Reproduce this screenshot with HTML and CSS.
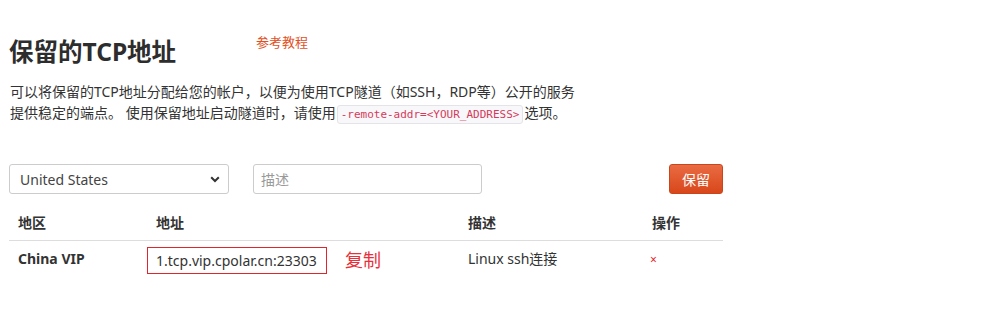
FILE: index.html
```html
<!DOCTYPE html>
<html>
<head>
<meta charset="utf-8">
<link rel="stylesheet" href="styles.css">
</head>
<body>
<div class="page">
  <div class="title-row">
    <h1 class="title">保留的TCP地址</h1>
    <a class="tutorial">参考教程</a>
  </div>
  <p class="desc">可以将保留的TCP地址分配给您的帐户，以便为使用TCP隧道（如SSH，RDP等）公开的服务<br>提供稳定的端点。 使用保留地址启动隧道时，请使用<code class="code">-remote-addr=&lt;YOUR_ADDRESS&gt;</code>选项。</p>
  <div class="form-row">
    <div class="select">
      <span>United States</span>
      <svg class="chev" width="10" height="7" viewBox="0 0 10 7"><path d="M1.2 1.2 L5 5 L8.8 1.2" fill="none" stroke="#333" stroke-width="2"/></svg>
    </div>
    <div class="input"><span class="ph">描述</span></div>
    <div class="spacer"></div>
    <button class="btn">保留</button>
  </div>
  <div class="table">
    <div class="thead">
      <div class="c1">地区</div>
      <div class="c2">地址</div>
      <div class="c3">描述</div>
      <div class="c4">操作</div>
    </div>
    <div class="trow">
      <div class="c1 bold lift">China VIP</div>
      <div class="c2 addr-cell"><span class="addr">1.tcp.vip.cpolar.cn:23303</span><span class="copy">复制</span></div>
      <div class="c3 lift">Linux ssh连接</div>
      <div class="c4 lift"><span class="del">×</span></div>
    </div>
  </div>
</div>
</body>
</html>
```
FILE: styles.css
```css
* { box-sizing: border-box; }
body {
  margin: 0;
  background: #fff;
  font-family: "Noto Sans", "Noto Sans CJK SC", sans-serif;
  color: #333;
  font-size: 14px;
}
.page {
  width: 723px;
  padding-left: 9px;
}
.title-row {
  display: flex;
  align-items: flex-start;
  height: 75px;
}
.title {
  margin: 35px 0 0 0;
  font-size: 24.5px;
  font-weight: bold;
  line-height: 34px;
  color: #2d2d2d;
}
.tutorial {
  margin: 32px 0 0 80px;
  color: #e14f24;
  font-size: 13px;
  line-height: 20px;
}
.desc {
  margin: 6px 0 0 1px;
  line-height: 21px;
  font-size: 14px;
}
.code {
  display: inline-block;
  font-family: "DejaVu Sans Mono", monospace;
  font-size: 11px;
  line-height: 17px;
  color: #d63a5a;
  background: #f8f8fa;
  border: 1px solid #e4e4e8;
  border-radius: 3px;
  padding: 0 3px;
  margin: 0 1px 0 1px;
  vertical-align: 0px;
}
.form-row {
  display: flex;
  align-items: center;
  margin-top: 40px;
  height: 30px;
}
.select {
  width: 220px;
  height: 30px;
  border: 1px solid #ccc;
  border-radius: 3px;
  display: flex;
  align-items: center;
  justify-content: space-between;
  padding: 0 8px 0 10px;
  color: #444;
}
.chev { display: block; }
.input {
  margin-left: 24px;
  width: 229px;
  height: 30px;
  border: 1px solid #ccc;
  border-radius: 3px;
  display: flex;
  align-items: center;
  padding-left: 7px;
}
.ph { color: #999; }
.spacer { flex: 1; }
.btn {
  width: 54px;
  height: 30px;
  border: 1px solid #c9461d;
  border-radius: 3px;
  background: linear-gradient(#ea6b42, #d8471b);
  color: #fff;
  font-family: "Noto Sans CJK SC", sans-serif;
  font-size: 14px;
  padding: 0;
}
.table {
  margin-top: 14px;
}
.thead, .trow {
  display: flex;
  align-items: center;
}
.thead {
  height: 33px;
  padding-bottom: 5px;
  border-bottom: 1px solid #ddd;
  font-weight: bold;
}
.trow {
  height: 39px;
}
.lift { padding-bottom: 5px; }
.c1 { width: 138px; padding-left: 9px; }
.c2 { width: 321px; }
.c3 { width: 184px; }
.c4 { flex: 1; }
.thead .c2 { padding-left: 9px; }
.bold { font-weight: bold; }
.addr-cell { display: flex; align-items: center; }
.addr {
  display: inline-block;
  width: 180px;
  height: 27px;
  line-height: 25px;
  border: 1px solid #e0262b;
  padding-left: 8px;
  font-size: 14px;
  white-space: nowrap;
}
.copy {
  margin-left: 18px;
  margin-bottom: 4px;
  color: #e8303a;
  font-size: 18px;
  font-family: "Noto Sans CJK SC", sans-serif;
}
.del {
  color: #e0262b;
  font-size: 12px;
  margin-left: -2px;
}
```
